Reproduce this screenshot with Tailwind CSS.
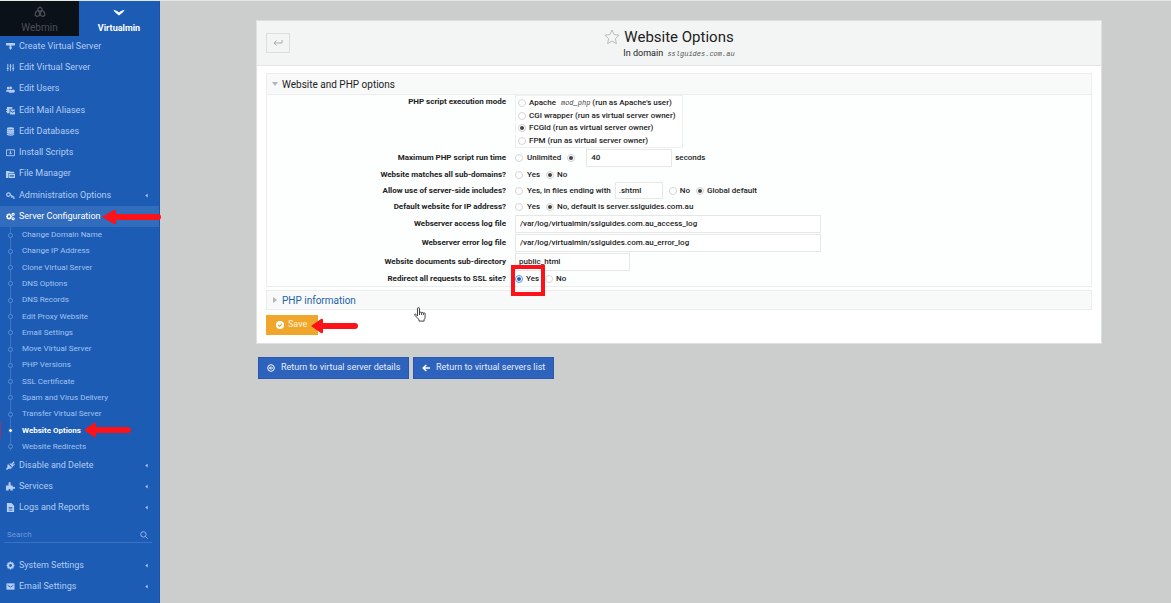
<!DOCTYPE html>
<html lang="en">
<head>
    <meta charset="UTF-8">
    <meta name="viewport" content="width=device-width, initial-scale=1.0">
    <title>Website Options - Virtualmin</title>
    <script src="https://cdn.jsdelivr.net/npm/@tailwindcss/browser@4"></script>
</head>
<body class="bg-[#cccecd] border-t border-[#e3e6e4] min-h-screen flex font-[Roboto,sans-serif] text-[#222]">

    <!-- Shared shapes -->
    <svg class="hidden">
        <symbol id="arrow" viewBox="0 0 60 16" preserveAspectRatio="xMinYMid slice">
            <path d="M1 8 L13 1 Q15 0 15 2 V5 H57 a3 3 0 0 1 0 6 H15 V14 Q15 16 13 15 Z" fill="#fb1319"/>
        </symbol>
        <symbol id="caret" viewBox="0 0 4 6"><path d="M3.5 .5v5L.5 3z" fill="currentColor"/></symbol>
    </svg>

    <!-- Sidebar -->
    <aside class="w-40 shrink-0 bg-[#1d5cb5] text-[#b3cdf3] border-r border-[#1a54a8] relative">
        <div class="flex h-[35px] text-[9px] leading-3">
            <a href="#" class="w-[79px] bg-[#0b1119] text-[#4a4f56] flex flex-col items-center pt-[5px]">
                <svg class="h-3 w-3" viewBox="0 0 12 12" fill="none" stroke="currentColor" stroke-width="1.2" stroke-linejoin="round"><path d="M4 4.200V2.500L6 1l2 1.500v1.700L6 5.500zM4 4.300 1.800 6 1 9l2 1.500 2.500-1V7zM8 4.300 10.200 6 11 9l-2 1.500-2.500-1V7z"/></svg>
                <span class="mt-1 text-[10px]">Webmin</span>
            </a>
            <a href="#" class="flex-1 text-white font-bold flex flex-col items-center pt-[5px]">
                <svg class="h-3 w-3" viewBox="0 0 12 12"><path d="M.3 3.8 C2.5 4.3 4.5 5 6 6.4 C7.5 5 9.5 4.3 11.7 3.8 C10.4 6.6 8.2 8 6 9.4 C3.8 8 1.6 6.6 .3 3.8Z" fill="#fff"/></svg>
                <span class="mt-1">Virtualmin</span>
            </a>
        </div>

        <ul class="grid h-[170px] auto-rows-fr text-[9px]">
            <li><a href="#" class="flex h-full items-center gap-1 pl-1.5">
                <svg class="size-[9px]" viewBox="0 0 10 10" fill="currentColor"><path d="M0 1h10v3H0zM4 4h2v2H4zM3 6h4L5 9z"/></svg>Create Virtual Server</a></li>
            <li><a href="#" class="flex h-full items-center gap-1 pl-1.5">
                <svg class="size-[9px]" viewBox="0 0 10 10" fill="none" stroke="currentColor"><path d="M2 1v8M5 1v8M8 1v8M.8 6h2.4M3.8 3.5h2.4M6.8 6h2.4"/></svg>Edit Virtual Server</a></li>
            <li><a href="#" class="flex h-full items-center gap-1 pl-1.5">
                <svg class="size-[9px]" viewBox="0 0 10 10" fill="currentColor"><circle cx="2.3" cy="3.4" r="1.4"/><circle cx="5.2" cy="3.4" r="1.6"/><path d="M0 7.5q0-2.5 2.5-2.5Q5 5 5 7.5zM3.2 8.5q0-3.2 2.2-3.2 1.8 0 1.8 3.2z"/><circle cx="8" cy="6.8" r="1.9"/></svg>Edit Users</a></li>
            <li><a href="#" class="flex h-full items-center gap-1 pl-1.5">
                <svg class="size-[9px]" viewBox="0 0 10 10" fill="currentColor"><path d="M1 1h6v2H4v5H1V6.500H0v-1h1v-1H0v-1h1z"/><path d="M4.600 3.800H10v1L7.300 6.500 4.600 4.800zM4.600 5.800l2.700 1.600L10 5.800V9.500H4.600z"/></svg>Edit Mail Aliases</a></li>
            <li><a href="#" class="flex h-full items-center gap-1 pl-1.5">
                <svg class="size-[9px]" viewBox="0 0 10 10" fill="currentColor"><ellipse cx="5" cy="1.600" rx="4" ry="1.300"/><path d="M1 2.600q4 1.800 8 0v2q-4 1.800-8 0zM1 5q4 1.800 8 0v2q-4 1.800-8 0zM1 7.400q4 1.800 8 0v1.200q-4 2-8 0z"/></svg>Edit Databases</a></li>
            <li><a href="#" class="flex h-full items-center gap-1 pl-1.5">
                <svg class="size-[9px]" viewBox="0 0 10 10" fill="none" stroke="currentColor"><path d="M.5 2h9v6.500h-9zM5 3v3.500M3.500 5.200 5 6.800l1.500-1.600"/></svg>Install Scripts</a></li>
            <li><a href="#" class="flex h-full items-center gap-1 pl-1.5">
                <svg class="size-[9px]" viewBox="0 0 10 10" fill="currentColor"><path d="M0 1h3.500l1 1H9v1.500H2.500V9H0z"/><path fill-rule="evenodd" d="M3 4.200h7V9H3zM4.200 5.600v.7H9v-.7zM4.200 7.200v.7H9v-.7z"/></svg>File Manager</a></li>
            <li><a href="#" class="flex h-full items-center gap-1 pl-1.5">
                <svg class="size-[9px]" viewBox="0 0 10 10" fill="none" stroke="currentColor" stroke-width="1.300"><circle cx="2.800" cy="4" r="2"/><path d="M4.800 4.400 9 7M6.500 6v1.800M8.800 7v2"/></svg>Administration Options
                <svg class="ml-auto mr-[11px] h-[5px] w-[3px]"><use href="#caret"/></svg></a></li>
        </ul>

        <div class="relative">
            <a href="#" class="flex h-[21px] items-center gap-1 pl-1.5 bg-[#316cbd] text-white text-[9px]">
                <svg class="size-[9px]" viewBox="0 0 10 10" fill="none" stroke="currentColor"><circle cx="3.400" cy="5" r="2.100" stroke-width="1.600"/><path d="M3.400 1.300v1M3.400 7.700v1M-.2 5h1M6 5h1M1 2.500l.7.700M5.100 6.700l.7.700M1 7.500l.7-.7M5.100 3.300l.7-.7" stroke-width="1.200"/><circle cx="8" cy="2.500" r="1.200" stroke-width="1.200"/><circle cx="8" cy="7.500" r="1.200" stroke-width="1.200"/></svg>Server Configuration</a>
            <svg class="absolute left-[101px] top-[3px] z-10 h-4 w-[60px]"><use href="#arrow"/></svg>
        </div>

        <div class="relative">
            <div class="absolute left-[10px] top-0 bottom-1 w-px bg-[#3a74c4]"></div>
            <ul class="relative grid h-[228px] auto-rows-fr text-[8px] text-[#a3c3f0]">
                <li><a href="#" class="flex h-full items-center gap-[9px] pl-2"><span class="size-[5px] rounded-full border border-[#5a8dd4] bg-[#1d5cb5]"></span>Change Domain Name</a></li>
                <li><a href="#" class="flex h-full items-center gap-[9px] pl-2"><span class="size-[5px] rounded-full border border-[#5a8dd4] bg-[#1d5cb5]"></span>Change IP Address</a></li>
                <li><a href="#" class="flex h-full items-center gap-[9px] pl-2"><span class="size-[5px] rounded-full border border-[#5a8dd4] bg-[#1d5cb5]"></span>Clone Virtual Server</a></li>
                <li><a href="#" class="flex h-full items-center gap-[9px] pl-2"><span class="size-[5px] rounded-full border border-[#5a8dd4] bg-[#1d5cb5]"></span>DNS Options</a></li>
                <li><a href="#" class="flex h-full items-center gap-[9px] pl-2"><span class="size-[5px] rounded-full border border-[#5a8dd4] bg-[#1d5cb5]"></span>DNS Records</a></li>
                <li><a href="#" class="flex h-full items-center gap-[9px] pl-2"><span class="size-[5px] rounded-full border border-[#5a8dd4] bg-[#1d5cb5]"></span>Edit Proxy Website</a></li>
                <li><a href="#" class="flex h-full items-center gap-[9px] pl-2"><span class="size-[5px] rounded-full border border-[#5a8dd4] bg-[#1d5cb5]"></span>Email Settings</a></li>
                <li><a href="#" class="flex h-full items-center gap-[9px] pl-2"><span class="size-[5px] rounded-full border border-[#5a8dd4] bg-[#1d5cb5]"></span>Move Virtual Server</a></li>
                <li><a href="#" class="flex h-full items-center gap-[9px] pl-2"><span class="size-[5px] rounded-full border border-[#5a8dd4] bg-[#1d5cb5]"></span>PHP Versions</a></li>
                <li><a href="#" class="flex h-full items-center gap-[9px] pl-2"><span class="size-[5px] rounded-full border border-[#5a8dd4] bg-[#1d5cb5]"></span>SSL Certificate</a></li>
                <li><a href="#" class="flex h-full items-center gap-[9px] pl-2"><span class="size-[5px] rounded-full border border-[#5a8dd4] bg-[#1d5cb5]"></span>Spam and Virus Delivery</a></li>
                <li><a href="#" class="flex h-full items-center gap-[9px] pl-2"><span class="size-[5px] rounded-full border border-[#5a8dd4] bg-[#1d5cb5]"></span>Transfer Virtual Server</a></li>
                <li class="relative"><a href="#" class="flex h-full items-center gap-[9px] border-l border-[#8a3a78] pl-[7px] font-bold text-white"><span class="size-[5px] rounded-full border border-[#1d5cb5] bg-white"></span>Website Options</a>
                    <svg class="absolute left-[83px] top-0 h-4 w-12" viewBox="0 0 48 16"><path d="M1 8 L11 1 Q13 0 13 2 V5 H45 a3 3 0 0 1 0 6 H13 V14 Q13 16 11 15 Z" fill="#fb1319"/></svg></li>
                <li><a href="#" class="flex h-full items-center gap-[9px] pl-2"><span class="size-[5px] rounded-full border border-[#5a8dd4] bg-[#1d5cb5]"></span>Website Redirects</a></li>
            </ul>
        </div>

        <ul class="text-[9px]">
            <li><a href="#" class="flex h-[21px] items-center gap-1 pl-1.5">
                <svg class="size-[9px]" viewBox="0 0 10 10" fill="currentColor"><path d="M2.200 3.200 6.800 7.800Q5.200 9 3.300 8.300L1 10 0 9l1.700-2.300Q1 4.700 2.200 3.200zM3.500 2.500 6 3 8.500.3l1 1L7.300 4l.5.500L9.500 2.800l.5.900L7.600 6.200l-.2 1z"/></svg>Disable and Delete
                <svg class="ml-auto mr-[11px] h-[5px] w-[3px]"><use href="#caret"/></svg></a></li>
            <li><a href="#" class="flex h-[21px] items-center gap-1 pl-1.5">
                <svg class="size-[9px]" viewBox="0 0 10 10" fill="currentColor"><path d="M0 4h2.800V2.500Q2.400 0 4 0t1.200 2.500V4H7.500v1.500H10v2H7.500V9.500H4.800V7.800H3v1.700H0z"/></svg>Services
                <svg class="ml-auto mr-[11px] h-[5px] w-[3px]"><use href="#caret"/></svg></a></li>
            <li><a href="#" class="flex h-[21px] items-center gap-1 pl-1.5">
                <svg class="size-[9px]" viewBox="0 0 10 10" fill="currentColor"><path fill-rule="evenodd" d="M1 0h5l3 3v7H1zM3 4.500v.8h4v-.8zM3 6v.8h4V6zM3 7.500v.8h4v-.8z"/></svg>Logs and Reports
                <svg class="ml-auto mr-[11px] h-[5px] w-[3px]"><use href="#caret"/></svg></a></li>
        </ul>

        <form class="mt-[9px] ml-1 mr-[7px] flex h-4 items-center border-b border-[#3a72c2] pl-[3px] pr-1">
            <input type="search" aria-label="Search" placeholder="Search" class="min-w-0 flex-1 bg-transparent text-[8px] outline-none placeholder:text-[#6c99da]">
            <svg class="size-2" viewBox="0 0 8 8" fill="none" stroke="#8fb4ea"><circle cx="3.400" cy="3.400" r="2.700"/><path d="m5.400 5.400 2.200 2.200"/></svg>
        </form>

        <ul class="mt-3 text-[9px]">
            <li><a href="#" class="flex h-[21px] items-center gap-1 pl-1.5">
                <svg class="size-[9px]" viewBox="0 0 10 10" fill="none" stroke="currentColor"><circle cx="5" cy="5" r="2.600" stroke-width="2"/><path d="M5 .6v1.600M5 7.800v1.600M.6 5h1.600M7.800 5h1.600M1.900 1.900 3 3M7 7l1.100 1.100M1.900 8.100 3 7M7 3l1.100-1.100" stroke-width="1.600"/></svg>System Settings
                <svg class="ml-auto mr-[11px] h-[5px] w-[3px]"><use href="#caret"/></svg></a></li>
            <li><a href="#" class="flex h-[21px] items-center gap-1 pl-1.5">
                <svg class="size-[9px]" viewBox="0 0 10 10"><path d="M.5 1.500h9v7h-9z" fill="currentColor"/><path d="M1.800 3.500 5 5.800l3.200-2.300" stroke="#1d5cb5" fill="none"/></svg>Email Settings
                <svg class="ml-auto mr-[11px] h-[5px] w-[3px]"><use href="#caret"/></svg></a></li>
        </ul>
    </aside>

    <!-- Content -->
    <main class="flex-1 pt-[19px] pl-24 pr-[69px]">
        <form class="bg-white border border-[#dfe1e0]">
            <header class="relative flex h-[45px] flex-col items-center justify-center border-b border-[#e4e6e5] bg-[#f3f5f4]">
                <button type="button" aria-label="Back" class="absolute left-[9px] top-3 flex h-5 w-6 items-center justify-center border border-[#dcdedd]">
                    <svg class="h-2 w-[10px]" viewBox="0 0 10 8" fill="none" stroke="#aaa"><path d="M9 1v3H1M3.500 1.500 1 4l2.500 2.500"/></svg>
                </button>
                <h1 class="relative text-[15px] leading-5">
                    <svg class="absolute right-full top-[2px] mr-1 size-4" viewBox="0 0 16 16" fill="none" stroke="#bbb" stroke-linejoin="round"><path d="m8 1 2.100 4.600 5 .6-3.700 3.400 1 5L8 12.100 3.600 14.600l1-5L.9 6.200l5-.6z"/></svg>
                    Website Options
                </h1>
                <p class="text-[9px] leading-3">In domain <span class="ml-[2px] font-['Liberation_Mono',monospace] text-[7px] italic text-[#555]">sslguides.com.au</span></p>
            </header>

            <div class="px-[9px] pt-[7px] pb-2">
                <section class="border border-[#eceeed]">
                    <h2 class="flex h-[21px] items-center gap-1 border-b border-[#eceeed] bg-[#f8f9f9] pl-[5px] text-[10px]">
                        <svg class="h-1 w-[6px]" viewBox="0 0 6 4"><path d="M0 0h6L3 4z" fill="#b5b5b5"/></svg>
                        Website and PHP options
                    </h2>
                    <div class="grid grid-cols-[239px_1fr] gap-x-[9px] bg-[#fdfefe] text-[8px] font-medium">
                        <div class="pt-px text-right leading-3 font-bold">PHP script execution mode</div>
                        <div class="flex h-[53px] w-[168px] flex-col justify-center border border-[#eef0ef] bg-white pl-[2px]">
                            <label class="flex h-[13px] items-center gap-[3px]"><input type="radio" name="mode" class="size-2 appearance-none rounded-full border border-[#d6d6d6] bg-white">Apache <i class="mx-[2px] font-['Liberation_Mono',monospace] text-[7px] font-normal text-[#444]">mod_php</i><span class="-ml-[3px]">(run as Apache's user)</span></label>
                            <label class="flex h-3 items-center gap-[3px]"><input type="radio" name="mode" class="size-2 appearance-none rounded-full border border-[#d6d6d6] bg-white">CGI wrapper (run as virtual server owner)</label>
                            <label class="flex h-[13px] items-center gap-[3px]"><input type="radio" name="mode" checked class="size-2 appearance-none rounded-full border border-[#d0d0d0] bg-[#444] bg-clip-content p-px">FCGId (run as virtual server owner)</label>
                            <label class="flex h-3 items-center gap-[3px]"><input type="radio" name="mode" class="size-2 appearance-none rounded-full border border-[#d6d6d6] bg-white">FPM (run as virtual server owner)</label>
                        </div>

                        <label for="runtime" class="flex h-[19px] items-center justify-end font-bold">Maximum PHP script run time</label>
                        <div class="flex items-center">
                            <label class="flex items-center gap-1"><input type="radio" name="limit" class="size-2 appearance-none rounded-full border border-[#d6d6d6] bg-white">Unlimited</label>
                            <input type="radio" name="limit" aria-label="Limited" checked class="ml-1.5 mr-[11px] size-2 appearance-none rounded-full border border-[#d0d0d0] bg-[#444] bg-clip-content p-px">
                            <input type="text" id="runtime" value="40" class="mr-[3px] h-[18px] w-[86px] border border-[#e6e8e7] bg-white px-1">seconds
                        </div>

                        <div class="flex h-[15px] items-center justify-end font-bold">Website matches all sub-domains?</div>
                        <div class="flex items-center gap-1.5">
                            <label class="flex items-center gap-1"><input type="radio" name="sub" class="size-2 appearance-none rounded-full border border-[#d6d6d6] bg-white">Yes</label>
                            <label class="flex items-center gap-[3px]"><input type="radio" name="sub" checked class="size-2 appearance-none rounded-full border border-[#d0d0d0] bg-[#444] bg-clip-content p-px">No</label>
                        </div>

                        <div class="flex h-[17px] items-center justify-end font-bold">Allow use of server-side includes?</div>
                        <div class="flex items-center gap-1.5">
                            <label class="flex items-center gap-1"><input type="radio" name="ssi" class="size-2 appearance-none rounded-full border border-[#d6d6d6] bg-white">Yes, in files ending with</label>
                            <input type="text" aria-label="Extension" value=".shtml" class="-ml-[2px] h-[17px] w-12 border border-[#e6e8e7] bg-white px-[3px]">
                            <label class="flex items-center gap-[3px]"><input type="radio" name="ssi" class="size-2 appearance-none rounded-full border border-[#d6d6d6] bg-white">No</label>
                            <label class="flex items-center gap-[3px]"><input type="radio" name="ssi" checked class="size-2 appearance-none rounded-full border border-[#d0d0d0] bg-[#444] bg-clip-content p-px">Global default</label>
                        </div>

                        <div class="flex h-[15px] items-center justify-end font-bold">Default website for IP address?</div>
                        <div class="flex items-center gap-1.5">
                            <label class="flex items-center gap-1"><input type="radio" name="ip" class="size-2 appearance-none rounded-full border border-[#d6d6d6] bg-white">Yes</label>
                            <label class="flex items-center gap-[3px]"><input type="radio" name="ip" checked class="size-2 appearance-none rounded-full border border-[#d0d0d0] bg-[#444] bg-clip-content p-px">No, default is server.sslguides.com.au</label>
                        </div>

                        <label for="access" class="flex h-[19px] items-center justify-end font-bold">Webserver access log file</label>
                        <div class="flex items-center"><input type="text" id="access" value="/var/log/virtualmin/sslguides.com.au_access_log" class="h-[18px] w-[306px] border border-[#e6e8e7] bg-white px-1"></div>

                        <label for="error" class="flex h-[19px] items-center justify-end font-bold">Webserver error log file</label>
                        <div class="flex items-center"><input type="text" id="error" value="/var/log/virtualmin/sslguides.com.au_error_log" class="h-[18px] w-[306px] border border-[#e6e8e7] bg-white px-1"></div>

                        <label for="docs" class="flex h-[19px] items-center justify-end font-bold">Website documents sub-directory</label>
                        <div class="flex items-center"><input type="text" id="docs" value="public_html" class="h-[18px] w-[115px] border border-[#e6e8e7] bg-white px-[3px]"></div>

                        <div class="flex h-[15px] items-center justify-end font-bold">Redirect all requests to SSL site?</div>
                        <div class="relative z-10 flex items-center gap-1.5">
                            <label class="flex items-center gap-[3px]"><input type="radio" name="ssl" checked class="size-2 appearance-none rounded-full border border-[#5d97de] bg-[#1c62c0] bg-clip-content p-px">Yes</label>
                            <label class="flex items-center gap-[3px]"><input type="radio" name="ssl" class="size-2 appearance-none rounded-full border border-[#d6d6d6] bg-white">No</label>
                            <span class="absolute -left-1 -top-[6px] h-[31px] w-[34px] border-4 border-[#fb1319]"></span>
                        </div>
                    </div>
                </section>

                <section class="relative mt-[3px] border border-[#eceeed] bg-[#f8f9f9]">
                    <h2 class="flex h-[18px] items-center gap-[5px] pl-1.5 text-[10px] text-[#2463a8]">
                        <svg class="h-[6px] w-1" viewBox="0 0 4 6"><path d="M0 0v6l4-3z" fill="#b5b5b5"/></svg>
                        <a href="#">PHP information</a>
                    </h2>
                    <!-- Pointer -->
                    <svg class="absolute left-[147px] top-4 h-[15px] w-3" viewBox="0 0 12 15" fill="#fff" stroke="#333" stroke-width=".9" stroke-linejoin="round"><path d="M3.500 9V1.800q0-1.200 1-1.200t1 1.200V6q0-.9 1-.9t1 1q0-.7.900-.7t1 1q0-.6.800-.6t.9.900V10q0 1.500-1 2.600v1.500H5v-1.500Q3.500 11.500 2.500 10L.8 8.200q-.4-.9.500-1.100.8 0 2.200 1.900zM5.500 6v2M7.500 6.200V8M9.400 6.500V8" /></svg>
                </section>

                <div class="relative mt-[5px]">
                    <button type="submit" class="flex h-5 w-[52px] items-center gap-1 bg-[#efa62b] pl-[10px] text-[9px] text-[#fff4dc]">
                        <svg class="size-2" viewBox="0 0 8 8"><circle cx="4" cy="4" r="4" fill="#fff"/><path d="m2.200 4 1.400 1.400L6 2.900" fill="none" stroke="#efa62b" stroke-width="1.200"/></svg>Save
                    </button>
                    <svg class="absolute left-[44px] top-[3px] h-4 w-12" viewBox="0 0 48 16"><path d="M1 8 L11 1 Q13 0 13 2 V5 H45 a3 3 0 0 1 0 6 H13 V14 Q13 16 11 15 Z" fill="#fb1319"/></svg>
                </div>
            </div>
        </form>

        <div class="mt-[13px] ml-[2px] flex gap-1 text-[9px] text-[#e4edfa]">
            <a href="#" class="flex h-[22px] w-[151px] items-center gap-1.5 border border-[#2858ae] bg-[#2e63bd] pl-2">
                <svg class="size-2" viewBox="0 0 8 8" fill="none" stroke="#fff"><circle cx="4" cy="4" r="3.300"/><path d="M6 4H2.500M4 2.500 2.500 4 4 5.500"/></svg>Return to virtual server details</a>
            <a href="#" class="flex h-[22px] w-[141px] items-center gap-1.5 border border-[#2858ae] bg-[#2e63bd] pl-2">
                <svg class="size-2" viewBox="0 0 8 8" fill="none" stroke="#fff" stroke-width="1.600"><path d="M8 4H1.500M4.300 1 1.300 4l3 3"/></svg>Return to virtual servers list</a>
        </div>
    </main>
</body>
</html>
